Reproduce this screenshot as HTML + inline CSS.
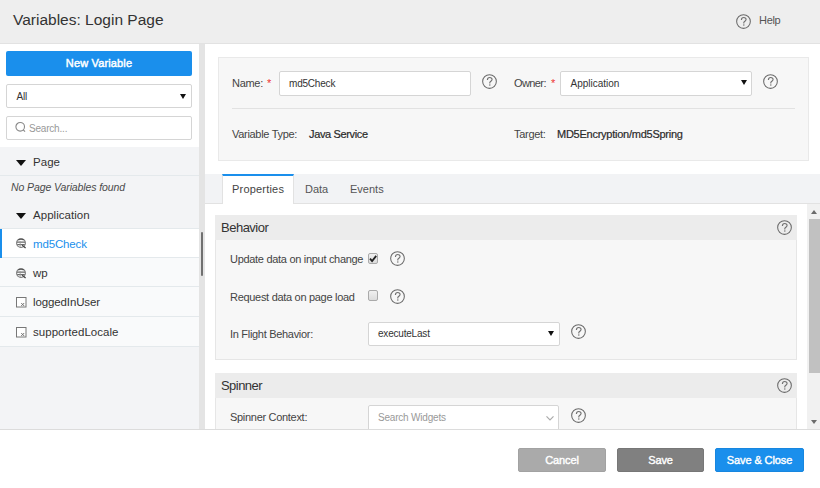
<!DOCTYPE html>
<html><head><meta charset="utf-8">
<style>
*{box-sizing:border-box;margin:0;padding:0}
html,body{width:820px;height:488px;overflow:hidden;background:#fff;font-family:"Liberation Sans",sans-serif;color:#333}
.a{position:absolute;white-space:nowrap}
.t11{font-size:11px;line-height:13px;letter-spacing:-0.3px;color:#444}
.t10{font-size:10px;line-height:12px;letter-spacing:-0.2px;color:#333}
.t12{font-size:11.5px;line-height:14px;letter-spacing:0.03px;color:#333}
.inp{position:absolute;background:#fff;border:1px solid #d5d5d5;border-radius:2px}
.row{position:absolute;left:0;width:199px}
.btn{position:absolute;top:448px;height:24px;border-radius:2px;color:#fff;font-size:11px;text-align:center;line-height:22px;letter-spacing:-0.1px;-webkit-text-stroke:0.4px #fff}
.q{position:absolute;width:15px;height:15px}
</style></head><body>
<svg width="0" height="0" style="position:absolute">
<defs>
<g id="qi"><circle cx="7.5" cy="7.5" r="6.85" fill="none" stroke="#6a6a6a" stroke-width="1.05"/><path d="M5.4 6 C5.4 4.3 6.4 3.5 7.7 3.5 C9 3.5 10.1 4.3 10.1 5.6 C10.1 7 8.1 7.4 7.8 8.6 L7.8 9.4" fill="none" stroke="#707070" stroke-width="1.1"/><circle cx="7.8" cy="11.1" r="0.75" fill="#707070"/></g>
<g id="gl"><circle cx="5" cy="5.1" r="4.4" fill="none" stroke="#7a7a7a" stroke-width="1.1"/><path d="M2.2 1.9 Q5 0.3 7.8 1.9" fill="none" stroke="#555" stroke-width="1.3"/><path d="M1 4.1 H9 M1.2 6.6 H8.8" stroke="#6a6a6a" stroke-width="1.1"/><path d="M4.2 3 V9" stroke="#999" stroke-width="0.8"/><path d="M6.2 7.2 L9.6 10" stroke="#444" stroke-width="1.3"/></g><g id="bx"><rect x="0.5" y="0.5" width="9.5" height="9.5" fill="#fff" stroke="#777" stroke-width="1"/><path d="M5.2 6 L8.2 9 M8.2 6 L5.2 9" stroke="#666" stroke-width="0.9"/></g></defs>
</svg>
<!-- header -->
<div class="a" style="left:0;top:0;width:820px;height:44px;background:#eeeeee;border-bottom:1px solid #e2e2e2"></div>
<div class="a" style="left:13px;top:11px;font-size:15.5px;line-height:18px;color:#333;letter-spacing:0">Variables: Login Page</div>
<svg class="q" style="left:736px;top:14px" viewBox="0 0 15 15"><use href="#qi"/></svg>
<div class="a t11" style="left:759px;top:14px;color:#555">Help</div>

<!-- left panel -->
<div class="a" style="left:0;top:44px;width:199px;height:386px;background:#f3f4f6"></div>
<div class="a" style="left:0;top:44px;width:199px;height:103px;background:#fff"></div>
<div class="a" style="left:199px;top:44px;width:6px;height:386px;background:#e4e4e4"></div>
<div class="a" style="left:201px;top:232px;width:2px;height:44px;background:#707070;border-radius:1px"></div>
<div class="a" style="left:6px;top:51px;width:186px;height:25px;background:#1a8fec;border-radius:2px;color:#fff;font-size:11px;text-align:center;line-height:25px;letter-spacing:0.15px;-webkit-text-stroke:0.45px #fff">New Variable</div>
<div class="inp" style="left:6px;top:84px;width:186px;height:24px"></div>
<div class="a t10" style="left:16.5px;top:91px">All</div>
<div class="a" style="left:179.5px;top:94px;width:0;height:0;border-left:3.5px solid transparent;border-right:3.5px solid transparent;border-top:5.5px solid #111"></div>
<div class="inp" style="left:6px;top:116px;width:186px;height:24px"></div>
<svg class="a" style="left:14px;top:120px" width="14" height="14" viewBox="0 0 14 14"><circle cx="6.2" cy="6.8" r="4.3" fill="none" stroke="#888" stroke-width="1.1"/><path d="M9.3 9.9 L11 11.6" stroke="#888" stroke-width="1.2"/></svg>
<div class="a t10" style="left:29px;top:122.5px;color:#999">Search...</div>

<div class="row a" style="top:147px;height:29px;border-bottom:1px solid #e4e9ec"></div>
<div class="a" style="left:16px;top:160px;width:0;height:0;border-left:5px solid transparent;border-right:5px solid transparent;border-top:6px solid #111"></div>
<div class="a t12" style="left:33px;top:154.5px">Page</div>
<div class="a" style="left:11px;top:181.2px;font-size:10.5px;line-height:12px;font-style:italic;color:#4a4a4a;letter-spacing:-0.1px">No Page Variables found</div>
<div class="a" style="left:16px;top:213px;width:0;height:0;border-left:5px solid transparent;border-right:5px solid transparent;border-top:6px solid #111"></div>
<div class="a t12" style="left:33px;top:207.5px">Application</div>

<div class="row a" style="top:228px;height:30px;background:#fff;border-top:1px solid #e4e9ec;border-bottom:1px solid #e4e9ec"></div>
<div class="a" style="left:0;top:229px;width:2px;height:29px;background:#1a8fec"></div>
<div class="a t12" style="left:33px;top:236.5px;color:#1a8fec;letter-spacing:-0.15px">md5Check</div>
<div class="row a" style="top:258px;height:29px;background:#f9fafb;border-bottom:1px solid #e4e9ec"></div>
<div class="a t12" style="left:33px;top:266px">wp</div>
<div class="row a" style="top:287px;height:30px;background:#f9fafb;border-bottom:1px solid #e4e9ec"></div>
<div class="a t12" style="left:33px;top:295px;letter-spacing:-0.12px">loggedInUser</div>
<div class="row a" style="top:317px;height:30px;background:#f9fafb;border-bottom:1px solid #e4e9ec"></div>
<div class="a t12" style="left:33px;top:325px">supportedLocale</div>

<svg class="a" style="left:15.5px;top:237.5px" width="11" height="11" viewBox="0 0 11 11"><use href="#gl"/></svg>
<svg class="a" style="left:15.5px;top:267.5px" width="11" height="11" viewBox="0 0 11 11"><use href="#gl"/></svg>
<svg class="a" style="left:15.5px;top:297px" width="11" height="11" viewBox="0 0 11 11"><use href="#bx"/></svg>
<svg class="a" style="left:15.5px;top:326.5px" width="11" height="11" viewBox="0 0 11 11"><use href="#bx"/></svg>
<!-- top card -->
<div class="a" style="left:218px;top:57px;width:591px;height:104px;background:#f7f7f7;border:1px solid #e9e9e9"></div>
<div class="a t11" style="left:232px;top:77px">Name:</div>
<div class="a" style="left:267px;top:77px;font-size:11px;color:#e33">*</div>
<div class="inp" style="left:279px;top:71px;width:192px;height:25px"></div>
<div class="a t10" style="left:289px;top:78px">md5Check</div>
<svg class="q" style="left:482px;top:74px" viewBox="0 0 15 15"><use href="#qi"/></svg>
<div class="a t11" style="left:514px;top:77px;letter-spacing:-0.6px">Owner:</div>
<div class="a" style="left:551px;top:77px;font-size:11px;color:#e33">*</div>
<div class="inp" style="left:560px;top:71px;width:192px;height:25px"></div>
<div class="a t10" style="left:570.5px;top:78px;letter-spacing:0">Application</div>
<div class="a" style="left:741px;top:80px;width:0;height:0;border-left:3px solid transparent;border-right:3px solid transparent;border-top:5.5px solid #111"></div>
<svg class="q" style="left:763px;top:74px" viewBox="0 0 15 15"><use href="#qi"/></svg>
<div class="a" style="left:232px;top:108px;width:563px;height:1px;background:#e2e2e2"></div>
<div class="a t11" style="left:232px;top:128px">Variable Type:</div>
<div class="a t11" style="left:309px;top:128px;color:#2a2a2a;letter-spacing:-0.35px;-webkit-text-stroke:0.2px #2a2a2a">Java Service</div>
<div class="a t11" style="left:514px;top:128px">Target:</div>
<div class="a t11" style="left:557px;top:128px;color:#2a2a2a;letter-spacing:-0.25px;-webkit-text-stroke:0.2px #2a2a2a">MD5Encryption/md5Spring</div>

<!-- tabs -->
<div class="a" style="left:205px;top:174px;width:615px;height:30px;background:#f2f3f5;border-bottom:1px solid #e2e2e2"></div>
<div class="a" style="left:222px;top:174px;width:72px;height:30px;background:#fff;border-top:2px solid #1a8fec;border-right:1px solid #e2e2e2;border-left:1px solid #e2e2e2"></div>
<div class="a t11" style="left:232px;top:183px;color:#444;letter-spacing:0.2px">Properties</div>
<div class="a t11" style="left:305px;top:183px;color:#555;letter-spacing:0">Data</div>
<div class="a t11" style="left:350px;top:183px;color:#555;letter-spacing:0">Events</div>

<!-- content -->
<div class="a" style="left:215px;top:215px;width:582px;height:145px;background:#f7f7f7;border:1px solid #e6e6e6;border-top:none"></div>
<div class="a" style="left:215px;top:215px;width:582px;height:25px;background:#ececec"></div>
<div class="a" style="left:221px;top:220px;font-size:13px;line-height:15px;color:#333;letter-spacing:-0.5px">Behavior</div>
<svg class="q" style="left:777px;top:220px" viewBox="0 0 15 15"><use href="#qi"/></svg>

<div class="a t11" style="left:230px;top:253px">Update data on input change</div>
<div class="a" style="left:368px;top:253px;width:10px;height:11px;border:1px solid #aaa;border-radius:2px;background:linear-gradient(#f0f0f0,#dcdcdc)"></div>
<svg class="a" style="left:368px;top:253px" width="10" height="11" viewBox="0 0 10 11"><path d="M2 5.6 L4.1 8 L8.2 2.9" fill="none" stroke="#222" stroke-width="1.8"/></svg>
<svg class="q" style="left:390px;top:251px" viewBox="0 0 15 15"><use href="#qi"/></svg>
<div class="a t11" style="left:230px;top:291px">Request data on page load</div>
<div class="a" style="left:368px;top:290px;width:10px;height:11px;border:1px solid #aaa;border-radius:2px;background:linear-gradient(#f0f0f0,#dcdcdc)"></div>
<svg class="q" style="left:390px;top:289px" viewBox="0 0 15 15"><use href="#qi"/></svg>
<div class="a t11" style="left:230px;top:327.5px">In Flight Behavior:</div>
<div class="inp" style="left:368px;top:322px;width:192px;height:24px"></div>
<div class="a t10" style="left:378px;top:328px">executeLast</div>
<div class="a" style="left:547.5px;top:331px;width:0;height:0;border-left:3px solid transparent;border-right:3px solid transparent;border-top:5.5px solid #111"></div>
<svg class="q" style="left:570.5px;top:324px" viewBox="0 0 15 15"><use href="#qi"/></svg>

<div class="a" style="left:215px;top:373px;width:582px;height:60px;background:#f7f7f7;border-left:1px solid #e6e6e6;border-right:1px solid #e6e6e6"></div>
<div class="a" style="left:215px;top:373px;width:582px;height:25px;background:#ececec"></div>
<div class="a" style="left:221px;top:378px;font-size:13px;line-height:15px;color:#333;letter-spacing:-0.55px">Spinner</div>
<svg class="q" style="left:777px;top:378px" viewBox="0 0 15 15"><use href="#qi"/></svg>
<div class="a t11" style="left:230px;top:411px">Spinner Context:</div>
<div class="inp" style="left:368px;top:405px;width:191px;height:30px"></div>
<div class="a t10" style="left:378px;top:412px;color:#999">Search Widgets</div>
<svg class="a" style="left:545px;top:415px" width="10" height="7" viewBox="0 0 10 7"><path d="M1.5 1.3 L5 4.8 L8.5 1.3" fill="none" stroke="#aaa" stroke-width="1.2"/></svg>
<svg class="q" style="left:570.5px;top:408px" viewBox="0 0 15 15"><use href="#qi"/></svg>

<!-- scrollbar -->
<div class="a" style="left:807px;top:204px;width:13px;height:226px;background:#f1f1f1"></div>
<div class="a" style="left:809px;top:219px;width:11px;height:153.5px;background:#c1c1c1"></div>
<div class="a" style="left:811px;top:210px;width:0;height:0;border-left:3.5px solid transparent;border-right:3.5px solid transparent;border-bottom:4px solid #6b6b6b"></div>
<div class="a" style="left:811px;top:420px;width:0;height:0;border-left:3.5px solid transparent;border-right:3.5px solid transparent;border-top:4px solid #6b6b6b"></div>

<!-- footer -->
<div class="a" style="left:0;top:429px;width:820px;height:59px;background:#fff;border-top:1px solid #dcdcdc"></div>
<div class="btn" style="left:518px;width:88px;background:#aaaaaa;border:1px solid #a2a2a2">Cancel</div>
<div class="btn" style="left:617px;width:87px;background:#808080;border:1px solid #777">Save</div>
<div class="btn" style="left:715px;width:89px;background:#1a8fec;border:1px solid #1786df">Save &amp; Close</div>
</body></html>
